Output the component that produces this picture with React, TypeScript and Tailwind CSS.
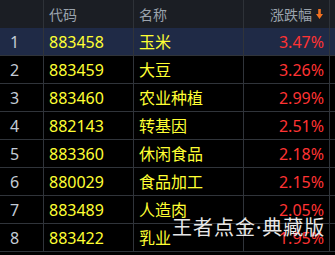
import React from 'react';

const rows = [
  { id: 1, code: '883458', name: '玉米', pct: '3.47%' },
  { id: 2, code: '883459', name: '大豆', pct: '3.26%' },
  { id: 3, code: '883460', name: '农业种植', pct: '2.99%' },
  { id: 4, code: '882143', name: '转基因', pct: '2.51%' },
  { id: 5, code: '883360', name: '休闲食品', pct: '2.18%' },
  { id: 6, code: '880029', name: '食品加工', pct: '2.15%' },
  { id: 7, code: '883489', name: '人造肉', pct: '2.05%' },
  { id: 8, code: '883422', name: '乳业', pct: '1.95%' },
];

const font = { fontFamily: '"Noto Sans", "Noto Sans CJK SC", sans-serif' };

export default function App() {
  return (
    <div className="relative w-[335px] h-[255px] overflow-hidden bg-black" style={font}>
      {/* Header */}
      <div className="grid grid-cols-[44px_90px_110px_86px] h-[28px] bg-[#1b1e24] text-[#9aa3ad] text-[14px]">
        <div className="border-r border-[#2e3238]" />
        <div className="flex items-center pl-[5px] border-r border-[#2e3238]">代码</div>
        <div className="flex items-center pl-[5px] border-r border-[#2e3238]">名称</div>
        <div className="flex items-center justify-end pr-[6px] gap-[4px] border-r border-[#2e3238]">
          <span>涨跌幅</span>
          <svg width="7" height="10" viewBox="0 0 7 10">
            <path d="M2.2 0h2.6v5h2.2L3.5 10 0 5h2.2z" fill="#f07020" />
          </svg>
        </div>
      </div>

      {/* Rows */}
      {rows.map((r) => (
        <div
          key={r.id}
          className={`grid grid-cols-[44px_90px_110px_86px] h-[28px] border-b border-[#30343a] text-[16px] ${
            r.id === 1 ? 'bg-[#1f2a46]' : 'bg-black'
          }`}
        >
          <div className="flex items-center pl-[10px] border-r border-[#30343a] text-[#c4ccd6]">{r.id}</div>
          <div className="flex items-center pl-[5px] border-r border-[#30343a] text-[#ffff33]">{r.code}</div>
          <div className="flex items-center pl-[5px] border-r border-[#30343a] text-[#ffff33]">{r.name}</div>
          <div className="flex items-center justify-end pr-[5px] border-r border-[#30343a] text-[#ff3333]">{r.pct}</div>
        </div>
      ))}

      {/* Watermark */}
      <div className="absolute left-[172px] top-[216px] text-[20px] leading-[24px] text-[#e8e8e8] tracking-[1px]">
        王者点金·典藏版
      </div>
    </div>
  );
}
